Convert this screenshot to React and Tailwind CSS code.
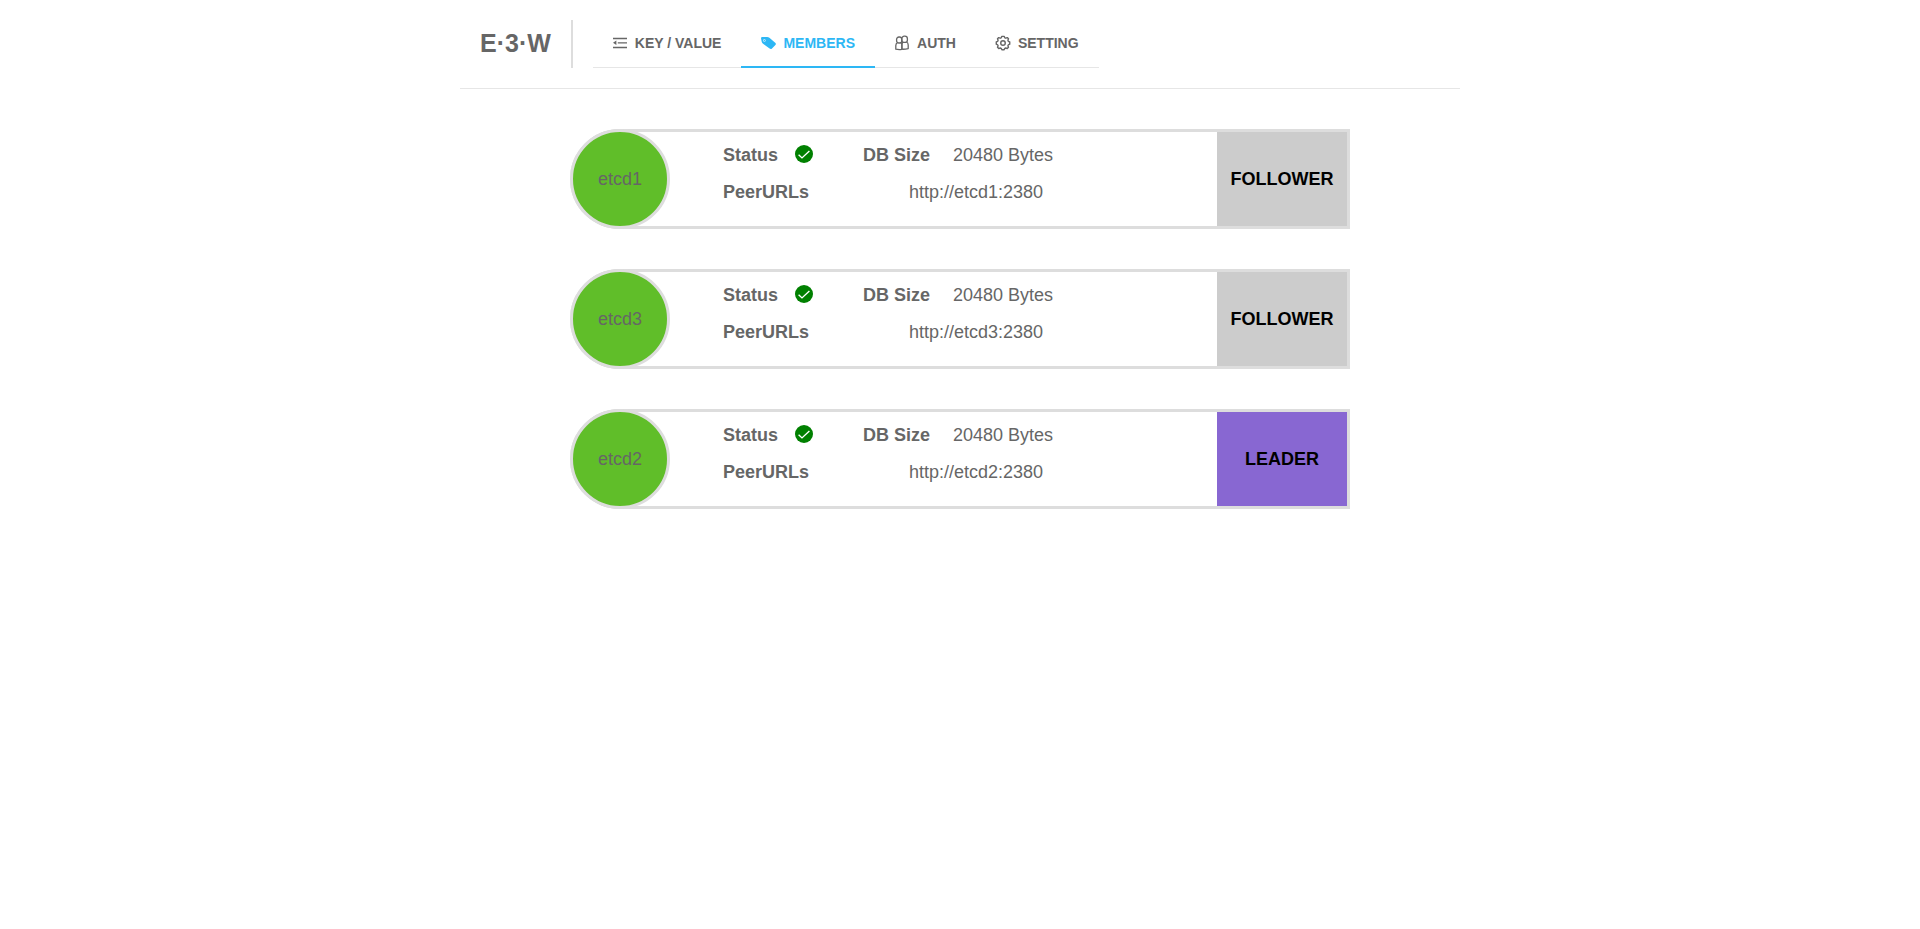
// src/App.jsx

import { useState } from "react";

const KeyValueIcon = () => (
  <svg className="w-3.5 h-3.5" viewBox="0 0 14 14" fill="none" stroke="currentColor" strokeWidth="1.3">
    <path d="M0 2.5h14M4.8 6.8h9.2M0 11.5h14" />
    <path d="M0 6.8l3.4-2.2v4.4z" fill="currentColor" stroke="none" />
  </svg>
);

const MembersIcon = () => (
  <svg className="w-3.5 h-3.5 overflow-visible" viewBox="0 0 14 14">
    <path
      fill="currentColor"
      fillRule="evenodd"
      d="M0 2.2Q0 1 1.2 1H6.2Q7.4 1 8.4 1.8L14.2 6.7Q15.4 7.8 14.4 8.9L11 12.4Q10 13.4 8.6 12.6L2 7.8Q0.9 7 0.7 5.8ZM3.4 3.2a1.2 1.2 0 1 0 0 2.4a1.2 1.2 0 0 0 0-2.4ZM3.4 3.8a.6.6 0 1 1 0 1.2a.6.6 0 0 1 0-1.2Z"
    />
  </svg>
);

const AuthIcon = () => (
  <svg className="w-3.5 h-4" viewBox="0 0 14 16" fill="none" stroke="currentColor" strokeWidth="1.3" strokeLinejoin="round">
    <rect x="1.6" y="2" width="5.2" height="6" rx="2.3" />
    <rect x="6.8" y="1.2" width="5.6" height="6.2" rx="2.5" />
    <path d="M2.6 7.6Q0.9 8.2 0.8 10.6V14.2Q3.8 14.9 6.9 14.4V10.6Q6.9 8.2 5.6 7.6" />
    <path d="M8 7Q6.9 8 6.9 10.4V14.2Q10 14.4 13.2 13.6V10Q13.2 7.6 11.4 7" />
  </svg>
);

const SettingIcon = () => (
  <svg className="w-3.5 h-3.5 overflow-visible" viewBox="0.6 0.6 14.8 14.8" fill="none" stroke="currentColor" strokeWidth="1.5" strokeLinejoin="round">
    <path d="M6.8 1h2.4l.7 1.5 1 .4 1.6-.6 1.3 1.3-.6 1.6.4 1 1.5.7v2.4l-1.5.7-.4 1 .6 1.6-1.3 1.3-1.6-.6-1 .4-.7 1.5H6.8l-.7-1.5-1-.4-1.6.6-1.3-1.3.6-1.6-.4-1L.9 9.3V6.9l1.5-.7.4-1-.6-1.6 1.3-1.3 1.6.6 1-.4z" />
    <circle cx="8" cy="8" r="2.4" />
  </svg>
);

const HealthyIcon = () => (
  <svg className="w-[18px] h-[18px]" viewBox="0 0 18 18" role="img" aria-label="healthy">
    <circle cx="9" cy="9" r="9" fill="#008000" />
    <path d="M3.6 9.7l3.4 3.2 7.4-6.8" fill="none" stroke="#fff" strokeWidth="1.4" />
  </svg>
);

const MENU = [
  { key: "kv", label: "KEY / VALUE", icon: KeyValueIcon },
  { key: "members", label: "MEMBERS", icon: MembersIcon },
  { key: "auth", label: "AUTH", icon: AuthIcon },
  { key: "setting", label: "SETTING", icon: SettingIcon },
];

const MEMBERS = [
  { name: "etcd1", role: "FOLLOWER", size: "20480 Bytes", peer: "http://etcd1:2380" },
  { name: "etcd3", role: "FOLLOWER", size: "20480 Bytes", peer: "http://etcd3:2380" },
  { name: "etcd2", role: "LEADER", size: "20480 Bytes", peer: "http://etcd2:2380" },
];

function Header({ active, onSelect }) {
  return (
    <header className="flex items-center border-b border-[#e6e6e6] py-5">
      <div className="flex h-12 items-center border-r-2 border-[#ddd] px-5 text-[25px] font-bold">E·3·W</div>
      <nav className="ml-5 flex h-12 border-b border-[#e6e6e6]">
        {MENU.map(({ key, label, icon: Icon }) => (
          <a
            key={key}
            href={`#${key}`}
            onClick={() => onSelect(key)}
            className={`-mb-px flex items-center gap-2 border-b-2 px-5 text-sm font-bold ${
              active === key ? "border-[#2db7f5] text-[#2db7f5]" : "border-transparent hover:text-[#2db7f5]"
            }`}
          >
            <Icon />
            <span>{label}</span>
          </a>
        ))}
      </nav>
    </header>
  );
}

function Member({ name, role, size, peer }) {
  return (
    <li className="flex rounded-l-full bg-[#ddd] text-lg">
      <div className="flex flex-1 rounded-l-full border-y-[3px] border-[#ddd] bg-white">
        {/* The circle sits over the card's own border */}
        <div className="-my-[3px] flex size-[100px] shrink-0 items-center justify-center rounded-full border-[3px] border-[#ddd] bg-[#60be29]">
          {name}
        </div>
        <dl className="ml-[53px] mt-1 flex-1">
          <div className="flex h-[37px] items-center">
            <dt className="w-[72px] font-bold">Status</dt>
            <dd className="w-[68px] pb-0.5">
              <HealthyIcon />
            </dd>
            <dt className="w-[90px] font-bold">DB Size</dt>
            <dd>{size}</dd>
          </div>
          <div className="flex h-[37px] items-center">
            <dt className="w-[186px] font-bold">PeerURLs</dt>
            <dd>{peer}</dd>
          </div>
        </dl>
      </div>
      <div
        className={`flex w-[133px] shrink-0 items-center justify-center border-y-[3px] border-r-[3px] border-[#ddd] font-bold text-black ${
          role === "LEADER" ? "bg-[#8867d2]" : "bg-[#ccc]"
        }`}
      >
        {role}
      </div>
    </li>
  );
}

export default function App() {
  const [active, setActive] = useState("members");

  return (
    <div className="mx-auto max-w-[1000px] font-['Liberation_Sans',Arial,sans-serif] text-[#666]">
      <Header active={active} onSelect={setActive} />
      <main className="px-[110px] py-10">
        <ul className="flex flex-col gap-10">
          {MEMBERS.map((member) => (
            <Member key={member.name} {...member} />
          ))}
        </ul>
      </main>
    </div>
  );
}
